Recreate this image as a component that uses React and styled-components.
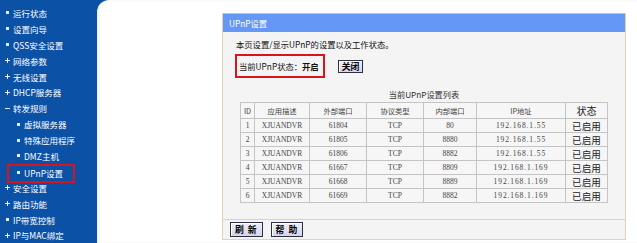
import React from 'react';
import styled, { createGlobalStyle } from 'styled-components';

const GlobalStyle = createGlobalStyle`
  html, body {
    margin: 0;
    padding: 0;
    overflow: hidden;
  }
  body {
    font-family: "Noto Sans CJK SC", "Liberation Sans", sans-serif;
  }
`;

const Page = styled.div`
  display: flex;
  width: 637px;
  height: 243px;
  background: #0b51a6;
`;

const Sidebar = styled.ul`
  width: 97px;
  flex-shrink: 0;
  margin: 0;
  padding: 5px 0 0 5px;
  box-sizing: border-box;
  list-style: none;
`;

const Item = styled.li`
  display: flex;
  align-items: center;
  height: 15.9px;
  padding-left: ${(props) => (props.$sub ? '11px' : '0')};
  color: #ffffff;
  font-size: 8.5px;
  white-space: nowrap;
`;

const Entry = styled.span`
  display: inline-flex;
  align-items: center;
  ${(props) =>
    props.$active &&
    `
    padding: 1px 10px 2px 7px;
    margin: 2px -10px -1px -7px;
    outline: 2px solid #d8141c;
  `}
`;

const Bullet = styled.span`
  position: relative;
  display: inline-block;
  width: 5px;
  height: 5px;
  margin-right: 3px;
  flex-shrink: 0;
  &::before,
  &::after {
    content: '';
    position: absolute;
    background: #e8f0ff;
  }
  &::before {
    ${(props) =>
      props.$kind === 'dot'
        ? 'left: 1px; top: 1px; width: 3px; height: 3px;'
        : 'left: 0; top: 2px; width: 5px; height: 1px;'}
  }
  &::after {
    ${(props) =>
      props.$kind === 'plus' ? 'left: 2px; top: 0; width: 1px; height: 5px;' : 'display: none;'}
  }
`;

const Main = styled.div`
  flex: 1;
  background: #ffffff;
  border-top-left-radius: 12px;
  padding: 13px 0 0 125px;
  box-shadow: inset 2px 0 3px rgba(0, 0, 0, 0.06);
`;

const Panel = styled.div`
  width: 404px;
  border: 1px solid #e2d3b2;
  border-top: none;
  background: #f4f4f4;
  box-sizing: border-box;
`;

const PanelHeader = styled.div`
  height: 18px;
  line-height: 18px;
  padding-left: 6px;
  background: #6597f7;
  border-top: 1px solid #a9c4f5;
  color: #ffffff;
  font-size: 8.3px;
`;

const PanelBody = styled.div`
  padding: 6px 12px 16px 12px;
  color: #111111;
  font-size: 8.3px;
`;

const Intro = styled.div`
  height: 12px;
  line-height: 12px;
  margin-left: 1px;
`;

const StatusRow = styled.div`
  display: flex;
  align-items: center;
  margin-top: 4px;
`;

const StatusBox = styled.div`
  display: flex;
  align-items: center;
  height: 20px;
  padding: 0 4px 0 2px;
  border: 2px solid #d8141c;
  strong {
    font-weight: 700;
  }
`;

const Button = styled.button`
  height: ${(props) => (props.$tall ? '15px' : '13px')};
  padding: 0 ${(props) => (props.$tall ? '4px' : '3px')};
  margin-left: ${(props) => props.$gap || 0}px;
  border: 1px solid #2d2d44;
  background: linear-gradient(#eeeef8, #d4d4ea);
  color: #000000;
  font-family: "Noto Sans CJK SC", sans-serif;
  font-size: 8.8px;
  font-weight: 700;
  line-height: 11px;
  letter-spacing: ${(props) => (props.$spaced ? '1px' : '0')};
  box-shadow: inset 1px 1px 0 #ffffff;
`;

const Caption = styled.div`
  margin-top: 10px;
  height: 12px;
  line-height: 12px;
  text-align: center;
  color: #333333;
  font-size: 8.2px;
`;

const Table = styled.table`
  width: 367px;
  margin: 2px auto 0;
  border-collapse: collapse;
  background: #f6f6f6;
  font-family: "Liberation Serif", "Noto Sans CJK SC", serif;
  font-size: 7.5px;
  color: #444444;
  table-layout: fixed;
`;

const Cell = styled.td`
  height: ${(props) => (props.$head ? '15px' : '13px')};
  padding: 0;
  border: 1px solid #c4c4c4;
  text-align: center;
  line-height: 10px;
  font-family: ${(props) =>
    props.$status ? '"Noto Sans CJK SC", sans-serif' : 'inherit'};
  font-size: ${(props) => (props.$status ? '9.6px' : 'inherit')};
  color: ${(props) => (props.$status ? '#222222' : 'inherit')};
  letter-spacing: ${(props) => (props.$ip ? '0.9px' : '0')};
`;

const HeadCell = styled(Cell).attrs({ as: 'th' })`
  font-weight: 400;
  font-family: "Noto Sans CJK SC", sans-serif;
  font-size: ${(props) => (props.$status ? '10px' : '7.3px')};
`;

const Footer = styled.div`
  display: flex;
  align-items: center;
  height: 19px;
  padding-left: 7px;
  border-top: 1px solid #e2d3b2;
`;

const columns = [
  { title: 'ID', width: 14 },
  { title: '应用描述', width: 55 },
  { title: '外部端口', width: 57 },
  { title: '协议类型', width: 57 },
  { title: '内部端口', width: 53 },
  { title: 'IP地址', width: 89 },
  { title: '状态', width: 42 }
];

const rows = [
  ['1', 'XJUANDVR', '61804', 'TCP', '80', '192.168.1.55'],
  ['2', 'XJUANDVR', '61805', 'TCP', '8880', '192.168.1.55'],
  ['3', 'XJUANDVR', '61806', 'TCP', '8882', '192.168.1.55'],
  ['4', 'XJUANDVR', '61667', 'TCP', '8809', '192.168.1.169'],
  ['5', 'XJUANDVR', '61668', 'TCP', '8889', '192.168.1.169'],
  ['6', 'XJUANDVR', '61669', 'TCP', '8882', '192.168.1.169']
];

const menu = [
  { label: '运行状态', kind: 'dot' },
  { label: '设置向导', kind: 'dot' },
  { label: 'QSS安全设置', kind: 'dot' },
  { label: '网络参数', kind: 'plus' },
  { label: '无线设置', kind: 'plus' },
  { label: 'DHCP服务器', kind: 'plus' },
  { label: '转发规则', kind: 'minus' },
  { label: '虚拟服务器', kind: 'dot', sub: true },
  { label: '特殊应用程序', kind: 'dot', sub: true },
  { label: 'DMZ主机', kind: 'dot', sub: true },
  { label: 'UPnP设置', kind: 'dot', sub: true, active: true },
  { label: '安全设置', kind: 'plus' },
  { label: '路由功能', kind: 'plus' },
  { label: 'IP带宽控制', kind: 'dot' },
  { label: 'IP与MAC绑定', kind: 'plus' }
];

export default function App() {
  return (
    <>
      <GlobalStyle />
      <Page>
        <Sidebar>
          {menu.map((item) => (
            <Item key={item.label} $sub={item.sub}>
              <Entry $active={item.active}>
                <Bullet $kind={item.kind} />
                {item.label}
              </Entry>
            </Item>
          ))}
        </Sidebar>
        <Main>
          <Panel>
            <PanelHeader>UPnP设置</PanelHeader>
            <PanelBody>
              <Intro>本页设置/显示UPnP的设置以及工作状态。</Intro>
              <StatusRow>
                <StatusBox>
                  当前UPnP状态：<strong>开启</strong>
                </StatusBox>
                <Button $gap={13}>关闭</Button>
              </StatusRow>
              <Caption>当前UPnP设置列表</Caption>
              <Table>
                <colgroup>
                  {columns.map((col) => (
                    <col key={col.title} style={{ width: col.width }} />
                  ))}
                </colgroup>
                <thead>
                  <tr>
                    {columns.map((col) => (
                      <HeadCell
                        key={col.title}
                        $head
                        $status={col.title === '状态'}
                      >
                        {col.title}
                      </HeadCell>
                    ))}
                  </tr>
                </thead>
                <tbody>
                  {rows.map((row) => (
                    <tr key={row[0]}>
                      {row.map((value, i) => (
                        <Cell key={i} $ip={i === 5}>
                          {value}
                        </Cell>
                      ))}
                      <Cell $status>已启用</Cell>
                    </tr>
                  ))}
                </tbody>
              </Table>
            </PanelBody>
            <Footer>
              <Button $tall $spaced>刷 新</Button>
              <Button $tall $spaced $gap={8}>帮 助</Button>
            </Footer>
          </Panel>
        </Main>
      </Page>
    </>
  );
}
